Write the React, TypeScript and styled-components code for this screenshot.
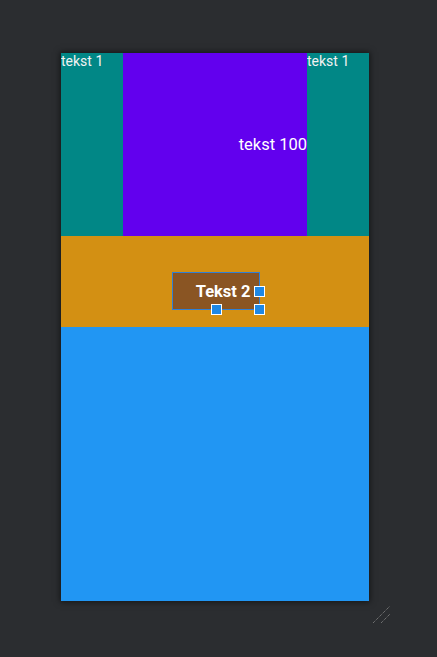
import styled, { createGlobalStyle } from "styled-components";

const GlobalStyle = createGlobalStyle`
  html, body {
    margin: 0;
    padding: 0;
    background: #2b2d30;
  }
  body {
    font-family: Roboto, "Noto Sans", sans-serif;
    width: 437px;
    height: 657px;
    overflow: hidden;
  }
`;

const Canvas = styled.div`
  width: 437px;
  height: 657px;
  padding: 53px 0 0 61px;
  box-sizing: border-box;
`;

const Device = styled.div`
  position: relative;
  width: 308px;
  height: 548px;
  display: flex;
  flex-direction: column;
  box-shadow: 0 0 6px 1px rgba(0, 0, 0, 0.55);
`;

const TopRow = styled.div`
  height: 183px;
  display: grid;
  grid-template-columns: 62px 184px 62px;
`;

const Column = styled.div<{ $bg: string }>`
  background: ${(p) => p.$bg};
  color: #f2f2f2;
  font-size: 14px;
  line-height: 17px;
  white-space: nowrap;
  overflow: hidden;
`;

const CenterColumn = styled.div`
  background: #6200ee;
  display: flex;
  align-items: center;
  justify-content: flex-end;
`;

const BigLabel = styled.span`
  color: #ffffff;
  font-size: 16.5px;
  line-height: 20px;
`;

const MiddleRow = styled.div`
  height: 91px;
  background: #d39013;
  display: flex;
  justify-content: center;
  padding: 37px 0 0 1px;
  box-sizing: border-box;
`;

const Button = styled.div`
  position: relative;
  width: 86px;
  height: 36px;
  box-sizing: border-box;
  background: #8a5523;
  outline: 1px solid #2f7fd6;
  display: flex;
  align-items: center;
  justify-content: flex-end;
  padding-right: 8px;
  color: #ffffff;
  font-weight: 700;
  font-size: 16.5px;
`;

const Handle = styled.span<{ $x: string; $y: string }>`
  position: absolute;
  left: ${(p) => p.$x};
  top: ${(p) => p.$y};
  width: 9px;
  height: 9px;
  margin: -5px 0 0 -5px;
  background: #1e88e5;
  border: 1px solid #ffffff;
`;

const BottomRow = styled.div`
  flex: 1;
  background: #2196f3;
`;

const Grip = styled.svg`
  position: absolute;
  left: 312px;
  top: 552px;
`;

export default function App() {
  return (
    <>
      <GlobalStyle />
      <Canvas>
        <Device>
          <TopRow>
            <Column $bg="#018786">tekst 1</Column>
            <CenterColumn>
              <BigLabel>tekst 100</BigLabel>
            </CenterColumn>
            <Column $bg="#018786">tekst 1</Column>
          </TopRow>
          <MiddleRow>
            <Button>
              Tekst 2
              <Handle $x="100%" $y="50%" />
              <Handle $x="50%" $y="100%" />
              <Handle $x="100%" $y="100%" />
            </Button>
          </MiddleRow>
          <BottomRow />
          <Grip width="20" height="20" viewBox="0 0 20 20">
            <line x1="0" y1="18" x2="17" y2="1" stroke="#8c8c8c" strokeWidth="1" strokeDasharray="1 1" />
            <line x1="8" y1="18" x2="17" y2="9" stroke="#8c8c8c" strokeWidth="1" strokeDasharray="1 1" />
          </Grip>
        </Device>
      </Canvas>
    </>
  );
}
